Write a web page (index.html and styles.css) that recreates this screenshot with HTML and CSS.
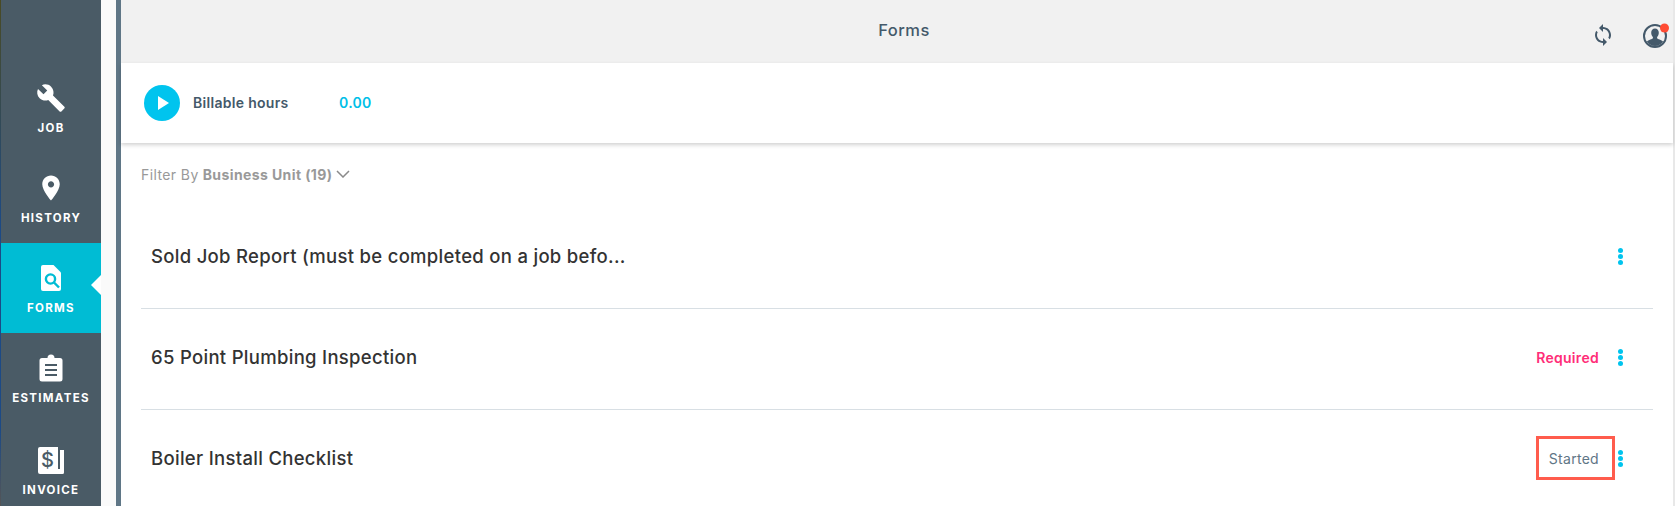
FILE: index.html
```html
<!DOCTYPE html>
<html lang="en">
<head>
    <meta charset="UTF-8">
    <meta name="viewport" content="width=device-width, initial-scale=1.0">
    <title>Forms</title>
    <link rel="stylesheet" href="styles.css">
</head>
<body>

    <div class="desktop-edge"></div>

    <nav class="sidebar">
        <a class="nav-item">
            <svg class="nav-icon" width="30" height="30" viewBox="0 0 24 24"><path fill="#fff" d="M22.7 19l-9.1-9.1c.9-2.3.4-5-1.5-6.9-2-2-5-2.4-7.4-1.3L9 6 6 9 1.6 4.7C.4 7.1.9 10.1 2.9 12.1c1.9 1.9 4.6 2.4 6.9 1.5l9.1 9.1c.4.4 1 .4 1.4 0l2.3-2.3c.5-.4.5-1.1.1-1.4z"/></svg>
            <span>JOB</span>
        </a>
        <a class="nav-item">
            <svg class="nav-icon" width="30" height="30" viewBox="0 0 24 24"><path fill="#fff" d="M12 2C8.13 2 5 5.13 5 9c0 5.25 7 13 7 13s7-7.75 7-13c0-3.87-3.13-7-7-7zm0 9.5c-1.38 0-2.5-1.12-2.5-2.5s1.12-2.5 2.5-2.5 2.5 1.12 2.5 2.5-1.12 2.5-2.5 2.5z"/></svg>
            <span>HISTORY</span>
        </a>
        <a class="nav-item active">
            <svg class="nav-icon" width="30" height="30" viewBox="0 0 30 30">
                <path fill="#fff" d="M7 2h10.5L25 9.5V26a2 2 0 0 1-2 2H7a2 2 0 0 1-2-2V4a2 2 0 0 1 2-2z"/>
                <circle cx="14.5" cy="16" r="4.6" fill="none" stroke="#00bcd4" stroke-width="2.4"/>
                <path d="M18 19.5l5 5" stroke="#00bcd4" stroke-width="2.4"/>
            </svg>
            <span>FORMS</span>
        </a>
        <a class="nav-item">
            <svg class="nav-icon" width="30" height="30" viewBox="0 0 30 30">
                <path fill="#fff" d="M6 5h5.500a3.500 3.500 0 0 1 7 0H24a2.500 2.500 0 0 1 2.500 2.500V26a2.500 2.500 0 0 1-2.500 2.500H6A2.500 2.500 0 0 1 3.500 26V7.500A2.500 2.500 0 0 1 6 5z"/>
                <path d="M9 12h12M9 17h12M9 22h12" stroke="#4a5b66" stroke-width="2.200"/>
            </svg>
            <span>ESTIMATES</span>
        </a>
        <a class="nav-item invoice">
            <svg class="nav-icon" width="30" height="30" viewBox="0 0 30 30">
                <path fill="#fff" d="M4 2h18v22h2V5h4v22.500a1.500 1.500 0 0 1-1.500 1.500H4a2 2 0 0 1-2-2V4a2 2 0 0 1 2-2z"/>
                <text class="dollar" x="12" y="22" text-anchor="middle">$</text>
            </svg>
            <span>INVOICE</span>
        </a>
    </nav>

    <div class="gutter"></div>

    <main class="content">
        <header class="top-bar">
            <h1 class="page-title">Forms</h1>
            <div class="top-icons">
                <svg width="24" height="24" viewBox="0 0 24 24"><path fill="#44596a" d="M12 4V1L8 5l4 4V6c3.31 0 6 2.69 6 6 0 1.01-.25 1.97-.7 2.8l1.46 1.46C19.54 15.03 20 13.57 20 12c0-4.42-3.58-8-8-8zm0 14c-3.31 0-6-2.69-6-6 0-1.01.25-1.97.7-2.8L5.24 7.74C4.46 8.97 4 10.43 4 12c0 4.42 3.58 8 8 8v3l4-4-4-4v3z"/></svg>
                <svg width="28" height="28" viewBox="0 0 28 28">
                    <circle cx="13" cy="15" r="11" fill="#f1f1f1" stroke="#44596a" stroke-width="2"/>
                    <path fill="#44596a" d="M13 7.500c2.300 0 3.800 1.800 3.800 4.200 0 1.900-.8 3.500-1.700 4.300v1.300c0 .8 4.800 1.500 6 3.400A11 11 0 0 1 13 25a11 11 0 0 1-8.100-4.300c1.200-1.900 6-2.600 6-3.400V16c-.9-.8-1.700-2.400-1.700-4.300 0-2.400 1.500-4.200 3.800-4.200z"/>
                    <circle cx="22.500" cy="7" r="4.500" fill="#ff4b33"/>
                </svg>
            </div>
        </header>

        <section class="timer-bar">
            <span class="play-button"></span>
            <span class="timer-label">Billable hours</span>
            <span class="timer-value">0.00</span>
        </section>

        <div class="filter">
            Filter By <b>Business Unit (19)</b>
            <svg width="14" height="8" viewBox="0 0 14 8"><path d="M1 1l6 6 6-6" fill="none" stroke="#8a8a8a" stroke-width="1.500"/></svg>
        </div>

        <div class="form-list">
            <div class="form-row">
                <span class="form-name">Sold Job Report (must be completed on a job befo...</span>
                <span class="kebab"></span>
            </div>
            <div class="form-row">
                <span class="form-name">65 Point Plumbing Inspection</span>
                <span class="status required">Required</span>
                <span class="kebab"></span>
            </div>
            <div class="form-row">
                <span class="form-name">Boiler Install Checklist</span>
                <span class="status started">Started</span>
                <span class="kebab"></span>
            </div>
        </div>
    </main>

</body>
</html>
```

FILE: styles.css
```css
body {
    font-family: Inter, "Open Sans", Arial, sans-serif;
    margin: 0;
    padding: 0;
    display: flex;
    height: 506px;
    overflow: hidden;
    background-color: #fafafa;
    color: #333;
}

.desktop-edge {
    width: 1px;
    background: linear-gradient(#4a4a22 0%, #1c4a86 45%, #1c4a86 85%, #555 100%);
}

.sidebar {
    width: 100px;
    padding-top: 63px;
    background: #4a5b66;
    display: flex;
    flex-direction: column;
    flex-shrink: 0;
}

.nav-item {
    height: 90px;
    flex-shrink: 0;
    box-sizing: border-box;
    padding-top: 20px;
    position: relative;
    display: flex;
    flex-direction: column;
    align-items: center;
    color: white;
    font-size: 11.5px;
    font-weight: 700;
    letter-spacing: 1.3px;
}

.nav-icon {
    margin-bottom: 8px;
}

.nav-item.invoice {
    padding-top: 22px;
}

.nav-item.active {
    background: #00bcd4;
}

.nav-item.active::after {
    content: "";
    position: absolute;
    right: 0;
    top: 32px;
    border: 10px solid transparent;
    border-left-width: 0;
    border-right-color: white;
}

.dollar {
    font-size: 20px;
    font-weight: 500;
    fill: #4a5b66;
}

.gutter {
    width: 15px;
    flex-shrink: 0;
    border-right: 5px solid #5f7686;
}

.content {
    flex-grow: 1;
    background: white;
    border-right: 2px solid #e8e8e8;
    display: flex;
    flex-direction: column;
}

.top-bar {
    height: 63px;
    flex-shrink: 0;
    background: #f1f1f1;
    display: flex;
    justify-content: flex-end;
    position: relative;
}

.page-title {
    position: absolute;
    left: 0;
    right: 0;
    margin: 0;
    padding: 20px 0 0 14px;
    text-align: center;
    font-size: 16.5px;
    font-weight: 500;
    letter-spacing: 0.5px;
    color: #44596a;
}

.top-icons {
    display: flex;
    align-items: center;
    gap: 27px;
    margin-top: 7px;
    padding-right: 3px;
}

.timer-bar {
    height: 80px;
    flex-shrink: 0;
    box-sizing: border-box;
    padding-left: 23px;
    display: flex;
    align-items: center;
    box-shadow: 0 2px 4px rgba(0, 0, 0, 0.18);
    position: relative;
}

.play-button {
    width: 36px;
    height: 36px;
    border-radius: 50%;
    background: #00c4ee;
    position: relative;
    margin-right: 13px;
}

.play-button::after {
    content: "";
    position: absolute;
    left: 14px;
    top: 11px;
    border-style: solid;
    border-width: 7px 0 7px 11px;
    border-color: transparent transparent transparent white;
}

.timer-label {
    width: 146px;
    margin-bottom: 2px;
    font-size: 14px;
    font-weight: 600;
    letter-spacing: 0.3px;
    color: #44596a;
}

.timer-value {
    margin-bottom: 2px;
    font-size: 14px;
    font-weight: 600;
    letter-spacing: 0.3px;
    color: #00bfe8;
}

.filter {
    margin: 22px 0 0 20px;
    height: 18px;
    flex-shrink: 0;
    display: flex;
    align-items: center;
    gap: 4px;
    font-size: 14px;
    letter-spacing: 0.4px;
    color: #999;
}

.filter svg {
    margin-left: 0;
}

.form-list {
    margin: 0 20px;
    padding-top: 25px;
}

.form-row {
    height: 96px;
    padding: 0 30px 4px 10px;
    display: flex;
    align-items: center;
    border-bottom: 1px solid #d8dfe4;
}

.form-name {
    flex-grow: 1;
    font-size: 18.5px;
    font-weight: 500;
    letter-spacing: 0.3px;
    color: #333;
}

.status {
    font-size: 14px;
    margin-right: 19px;
    position: relative;
    letter-spacing: 0.3px;
}

.required {
    color: #ff2d78;
    font-weight: 600;
}

.started {
    color: #5f7686;
}

/* caixa vermelha por cima do status */
.started::after {
    content: "";
    position: absolute;
    left: -13px;
    right: -16px;
    top: -14px;
    bottom: -13px;
    border: 3px solid #ff5c4d;
}

.kebab {
    width: 5px;
    height: 5px;
    border-radius: 50%;
    background: #00c4ee;
    box-shadow: 0 -6px 0 #00c4ee, 0 6px 0 #00c4ee;
}
```
